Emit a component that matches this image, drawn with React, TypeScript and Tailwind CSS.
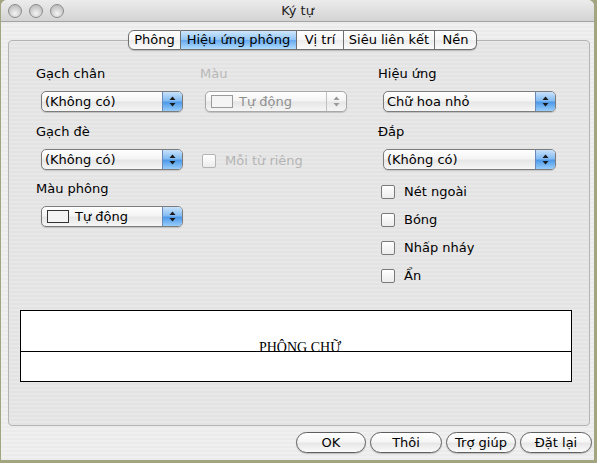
import React from "react";

const font = { fontFamily: '"DejaVu Sans", "Noto Sans", sans-serif' };

function Arrows({ color = "#1a1a1a" }: { color?: string }) {
  return (
    <svg width="7" height="11" viewBox="0 0 7 11">
      <path d="M3.5 0.5 L6.5 4 L0.5 4 Z" fill={color} />
      <path d="M0.5 7 L6.5 7 L3.5 10.5 Z" fill={color} />
    </svg>
  );
}

function Popup({
  w,
  text,
  swatch,
  disabled,
}: {
  w: string;
  text: string;
  swatch?: boolean;
  disabled?: boolean;
}) {
  return (
    <div
      className={`${w} h-[21px] rounded-[5px] border ${
        disabled ? "border-[#a8a8a8]" : "border-[#7c7c7c]"
      } flex overflow-hidden bg-[linear-gradient(to_bottom,#ffffff,#f4f4f4_45%,#e6e6e6_55%,#f6f6f6)] shadow-[0_1px_1px_rgba(0,0,0,0.15)]`}
    >
      <div
        className={`flex-1 flex items-center pl-[3px] text-[13px] ${
          disabled ? "text-[#8f8f8f]" : "text-black"
        }`}
      >
        {swatch && (
          <span
            className={`w-[22px] h-[13px] border ${
              disabled ? "border-[#9a9a9a]" : "border-[#333]"
            } bg-[#f4f4f4] ml-[2px] mr-[6px]`}
          />
        )}
        {text}
      </div>
      {disabled ? (
        <div className="w-[20px] border-l border-[#c0c0c0] flex items-center justify-center">
          <Arrows color="#9a9a9a" />
        </div>
      ) : (
        <div className="w-[20px] border-l border-[#6a88b8] flex items-center justify-center bg-[linear-gradient(to_bottom,#c8e2fb,#85bcf2_45%,#4f9ae9_55%,#98cdfb)]">
          <Arrows />
        </div>
      )}
    </div>
  );
}

function Check({ label, disabled }: { label: string; disabled?: boolean }) {
  return (
    <div className="flex items-center h-[16px]">
      <span
        className={`w-[14px] h-[14px] rounded-[2px] border ${
          disabled ? "border-[#b4b4b4]" : "border-[#7a7a7a]"
        } bg-[linear-gradient(to_bottom,#ffffff,#ececec)]`}
      />
      <span
        className={`ml-[9px] text-[13px] ${
          disabled ? "text-[#b4b4b4]" : "text-black"
        }`}
      >
        {label}
      </span>
    </div>
  );
}

function Tab({
  label,
  w,
  selected,
  first,
  last,
}: {
  label: string;
  w: string;
  selected?: boolean;
  first?: boolean;
  last?: boolean;
}) {
  return (
    <div
      className={`${w} h-full flex items-center justify-center text-[13px] text-black border-y border-[#6f6f6f] ${
        first ? "rounded-l-[6px] border-l" : ""
      } ${last ? "rounded-r-[6px] border-r" : "border-r"} ${
        selected
          ? "bg-[linear-gradient(to_bottom,#cfe7fd,#92c6f6_48%,#67aaf0_52%,#b0dcfe)]"
          : "bg-[linear-gradient(to_bottom,#ffffff,#f7f7f7_48%,#ececec_52%,#fbfbfb)]"
      }`}
    >
      {label}
    </div>
  );
}

function Button({ label, w }: { label: string; w: string }) {
  return (
    <div
      className={`${w} h-[21px] rounded-full border border-[#5f5f5f] flex items-center justify-center text-[13px] text-black bg-[linear-gradient(to_bottom,#ffffff,#f6f6f6_45%,#e7e7e7_55%,#fbfbfb)] shadow-[0_1px_1px_rgba(0,0,0,0.2)]`}
    >
      {label}
    </div>
  );
}

function Light() {
  return (
    <span className="w-[14px] h-[14px] rounded-full border border-[#8c8c8c] bg-[radial-gradient(circle_at_50%_70%,#f4f4f4,#c9c9c9_60%,#b4b4b4)]" />
  );
}

export default function App() {
  return (
    <div className="w-[597px] h-[463px] bg-[#a2a57f] overflow-hidden" style={font}>
      <div className="ml-[1px] w-[593px] h-[460px] rounded-t-[6px] overflow-hidden flex flex-col bg-[repeating-linear-gradient(to_bottom,#f0f0f0_0px,#f0f0f0_2px,#ebebeb_2px,#ebebeb_4px)]">
        {/* title bar */}
        <div className="h-[22px] shrink-0 relative flex items-center border-b border-[#a4a4a4] bg-[linear-gradient(to_bottom,#ececec,#d3d3d3)]">
          <div className="flex gap-[7px] pl-[7px]">
            <Light />
            <Light />
            <Light />
          </div>
          <div className="absolute inset-0 flex items-center justify-center text-[13px] text-[#222]">
            Ký tự
          </div>
        </div>

        {/* body */}
        <div className="flex-1 flex flex-col px-[7px] pt-[8px]">
          <div className="flex justify-center h-[20px] relative z-10 pl-[10px]">
            <div className="flex h-full shadow-[0_1px_1px_rgba(0,0,0,0.2)] rounded-[6px]">
              <Tab label="Phông" w="w-[53px]" first />
              <Tab label="Hiệu ứng phông" w="w-[116px]" selected />
              <Tab label="Vị trí" w="w-[47px]" />
              <Tab label="Siêu liên kết" w="w-[91px]" />
              <Tab label="Nền" w="w-[42px]" last />
            </div>
          </div>

          <div className="-mt-[10px] h-[386px] w-[582px] rounded-[4px] border border-[#b4b4b4] bg-[repeating-linear-gradient(to_bottom,#e8e8e8_0px,#e8e8e8_2px,#e3e3e3_2px,#e3e3e3_4px)] flex flex-col">
            <div className="flex pl-[27px] pt-[25px]">
              {/* left column */}
              <div className="w-[164px] flex flex-col">
                <div className="h-[16px] text-[13px] leading-[16px]">Gạch chân</div>
                <div className="ml-[5px] mt-[9px]">
                  <Popup w="w-[142px]" text="(Không có)" />
                </div>
                <div className="mt-[12px] h-[16px] text-[13px] leading-[16px]">Gạch đè</div>
                <div className="ml-[5px] mt-[9px]">
                  <Popup w="w-[142px]" text="(Không có)" />
                </div>
                <div className="mt-[11px] h-[16px] text-[13px] leading-[16px]">Màu phông</div>
                <div className="ml-[5px] mt-[9px]">
                  <Popup w="w-[142px]" text="Tự động" swatch />
                </div>
              </div>

              {/* middle column */}
              <div className="w-[178px] flex flex-col">
                <div className="h-[16px] text-[13px] leading-[16px] text-[#b8b8b8]">Màu</div>
                <div className="ml-[5px] mt-[9px]">
                  <Popup w="w-[142px]" text="Tự động" swatch disabled />
                </div>
                <div className="ml-[2px] mt-[41px]">
                  <Check label="Mỗi từ riêng" disabled />
                </div>
              </div>

              {/* right column */}
              <div className="flex flex-col">
                <div className="h-[16px] text-[13px] leading-[16px]">Hiệu ứng</div>
                <div className="ml-[5px] mt-[9px]">
                  <Popup w="w-[173px]" text="Chữ hoa nhỏ" />
                </div>
                <div className="mt-[12px] h-[16px] text-[13px] leading-[16px]">Đắp</div>
                <div className="ml-[5px] mt-[9px]">
                  <Popup w="w-[173px]" text="(Không có)" />
                </div>
                <div className="ml-[3px] mt-[14px] flex flex-col gap-[12px]">
                  <Check label="Nét ngoài" />
                  <Check label="Bóng" />
                  <Check label="Nhấp nháy" />
                  <Check label="Ẩn" />
                </div>
              </div>
            </div>

            {/* preview */}
            <div className="ml-[11px] mt-[26px] w-[552px] h-[72px] bg-white border border-black flex flex-col">
              <div className="h-[41px] border-b border-black flex items-end justify-center pl-[8px]">
                <span
                  className="text-[14px] leading-none translate-y-[4px]"
                  style={{ fontFamily: '"Liberation Serif", "DejaVu Serif", serif' }}
                >
                  PHÔNG CHỮ
                </span>
              </div>
              <div className="flex-1" />
            </div>
          </div>

          {/* buttons */}
          <div className="flex justify-end gap-[4px] mt-[6px] -mr-[5px]">
            <Button label="OK" w="w-[70px]" />
            <Button label="Thôi" w="w-[72px]" />
            <Button label="Trợ giúp" w="w-[70px]" />
            <Button label="Đặt lại" w="w-[72px]" />
          </div>
        </div>
      </div>
    </div>
  );
}
